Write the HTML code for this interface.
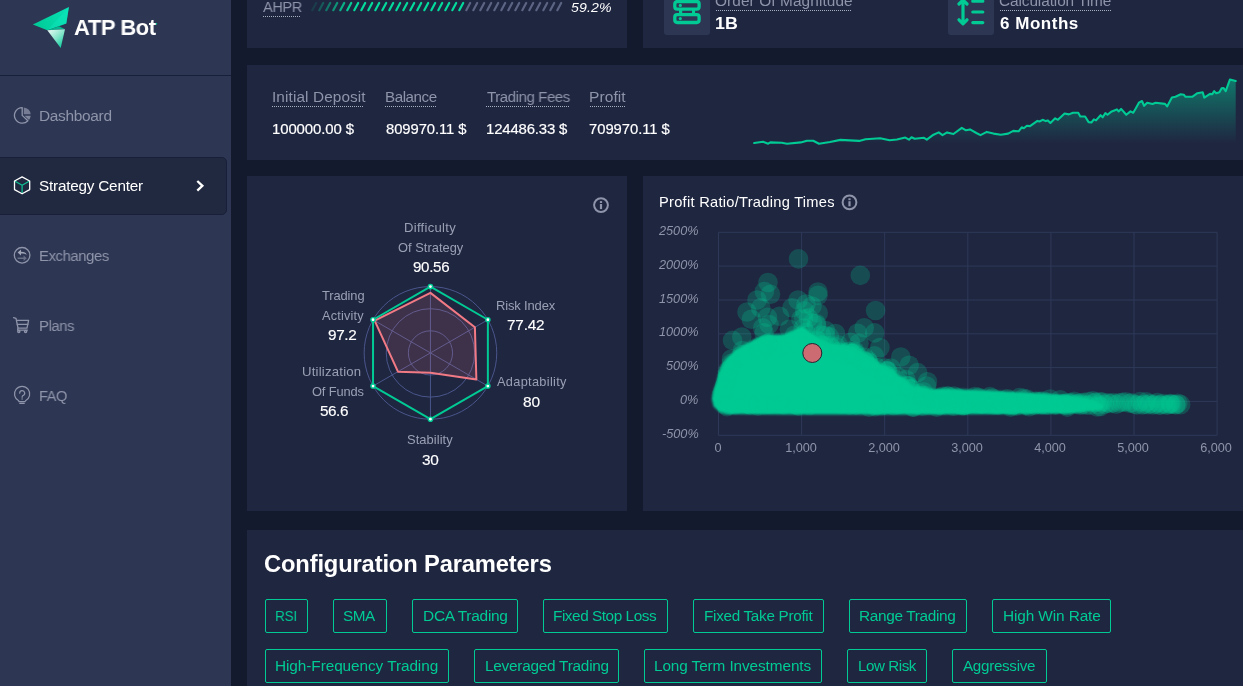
<!DOCTYPE html>
<html><head><meta charset="utf-8"><title>ATP Bot</title>
<style>
html,body{margin:0;padding:0;}
body{width:1243px;height:686px;overflow:hidden;background:#131a2e;position:relative;font-family:"Liberation Sans",sans-serif;}
.side{position:absolute;left:0;top:0;width:231px;height:686px;background:#2d3753;}
.hr{position:absolute;left:0;top:75px;width:231px;height:1px;background:#172039;}
.act{position:absolute;left:-1px;top:157px;width:226px;height:56px;background:#20293f;border:1px solid #172038;border-radius:0 5px 5px 0;}
.card{position:absolute;background:#1f2640;}
.t{position:absolute;white-space:nowrap;line-height:1;transform-origin:0 50%;will-change:transform;}
.ul{position:absolute;height:1.2px;background:repeating-linear-gradient(90deg,#a9aec0 0 1px,transparent 1px 2px);}
.ib{position:absolute;background:#2d3753;border-radius:3px;}
.tag{position:absolute;height:34px;border:1px solid #01ca94;border-radius:2px;box-sizing:border-box;}
svg{position:absolute;left:0;top:0;}
</style></head><body>
<div class="side"></div><div class="hr"></div><div class="act"></div>
<div class="card" style="left:247px;top:0;width:380px;height:48px"></div>
<div class="card" style="left:643px;top:0;width:600px;height:48px"></div>
<div class="card" style="left:247px;top:65px;width:996px;height:95px"></div>
<div class="card" style="left:247px;top:176px;width:380px;height:335px"></div>
<div class="card" style="left:643px;top:176px;width:600px;height:335px"></div>
<div class="card" style="left:247px;top:530px;width:996px;height:156px"></div>
<div class="ib" style="left:664px;top:-10px;width:46px;height:45px"></div>
<div class="ib" style="left:948px;top:-10px;width:46px;height:45px"></div>
<div class="ul" style="left:263px;top:16px;width:38px"></div>
<div class="ul" style="left:716px;top:10px;width:136px"></div>
<div class="ul" style="left:1000px;top:10px;width:111px"></div>
<div class="ul" style="left:272px;top:106px;width:92px"></div>
<div class="ul" style="left:385px;top:106px;width:51px"></div>
<div class="ul" style="left:486px;top:106px;width:83px"></div>
<div class="ul" style="left:589.5px;top:106px;width:36px"></div>
<div class="tag" style="left:265px;top:599px;width:43px"></div>
<div class="tag" style="left:333px;top:599px;width:54px"></div>
<div class="tag" style="left:412px;top:599px;width:106px"></div>
<div class="tag" style="left:543px;top:599px;width:125px"></div>
<div class="tag" style="left:693px;top:599px;width:131px"></div>
<div class="tag" style="left:849px;top:599px;width:118px"></div>
<div class="tag" style="left:992px;top:599px;width:119px"></div>
<div class="tag" style="left:265px;top:649px;width:184px"></div>
<div class="tag" style="left:474px;top:649px;width:145px"></div>
<div class="tag" style="left:644px;top:649px;width:178px"></div>
<div class="tag" style="left:847px;top:649px;width:80px"></div>
<div class="tag" style="left:952px;top:649px;width:95px"></div>
<svg width="1243" height="686" viewBox="0 0 1243 686">
<defs><linearGradient id="sg" x1="0" y1="79" x2="0" y2="143.5" gradientUnits="userSpaceOnUse"><stop offset="0" stop-color="#02c896" stop-opacity="0.5"/><stop offset="1" stop-color="#02c896" stop-opacity="0"/></linearGradient></defs>
<polygon points="754.2,143.0 763.0,141.8 768.2,143.7 770.3,142.4 781.8,142.8 787.0,143.7 800.7,142.4 807.0,140.7 813.2,140.7 819.0,143.7 830.0,142.0 840.4,139.9 859.2,140.9 865.5,139.3 880.2,138.2 889.6,140.3 896.9,139.5 905.3,137.6 909.0,139.7 911.5,137.2 914.7,138.8 924.0,137.8 926.8,139.7 933.5,134.7 938.7,132.4 942.5,135.1 947.1,132.4 953.4,134.0 961.8,127.8 966.0,130.3 970.0,129.4 976.4,133.0 980.5,135.1 986.8,131.9 993.5,133.6 1000.8,134.7 1008.1,133.6 1013.3,130.9 1018.6,131.3 1021.7,127.3 1023.8,128.2 1026.9,125.7 1030.0,126.1 1037.4,120.9 1039.5,121.5 1042.6,119.8 1045.8,121.1 1047.9,120.4 1050.4,123.0 1055.2,118.3 1057.9,119.8 1064.6,113.5 1068.8,114.4 1073.0,112.7 1078.2,112.7 1080.3,116.5 1085.1,116.5 1088.6,122.1 1091.4,122.5 1093.9,119.4 1096.0,120.4 1100.6,115.2 1102.7,117.3 1105.4,113.1 1107.5,114.8 1111.7,111.4 1116.9,109.4 1118.6,111.4 1121.1,108.9 1126.3,114.8 1130.5,111.4 1133.2,112.7 1135.7,108.5 1138.9,102.7 1142.0,101.0 1144.1,105.8 1147.2,102.7 1152.5,103.9 1155.6,102.7 1165.0,103.9 1167.1,106.4 1171.9,97.6 1175.5,96.8 1180.7,94.3 1183.8,94.7 1185.5,96.8 1192.2,96.8 1197.4,93.2 1202.7,92.2 1204.3,97.6 1210.0,93.9 1212.1,94.3 1214.2,91.2 1216.3,93.2 1219.4,92.2 1221.5,88.4 1223.6,88.0 1225.7,91.2 1229.9,79.6 1235.7,80.9 1235.7,143.5 754.2,143.5" fill="url(#sg)"/><polyline points="754.2,143.0 763.0,141.8 768.2,143.7 770.3,142.4 781.8,142.8 787.0,143.7 800.7,142.4 807.0,140.7 813.2,140.7 819.0,143.7 830.0,142.0 840.4,139.9 859.2,140.9 865.5,139.3 880.2,138.2 889.6,140.3 896.9,139.5 905.3,137.6 909.0,139.7 911.5,137.2 914.7,138.8 924.0,137.8 926.8,139.7 933.5,134.7 938.7,132.4 942.5,135.1 947.1,132.4 953.4,134.0 961.8,127.8 966.0,130.3 970.0,129.4 976.4,133.0 980.5,135.1 986.8,131.9 993.5,133.6 1000.8,134.7 1008.1,133.6 1013.3,130.9 1018.6,131.3 1021.7,127.3 1023.8,128.2 1026.9,125.7 1030.0,126.1 1037.4,120.9 1039.5,121.5 1042.6,119.8 1045.8,121.1 1047.9,120.4 1050.4,123.0 1055.2,118.3 1057.9,119.8 1064.6,113.5 1068.8,114.4 1073.0,112.7 1078.2,112.7 1080.3,116.5 1085.1,116.5 1088.6,122.1 1091.4,122.5 1093.9,119.4 1096.0,120.4 1100.6,115.2 1102.7,117.3 1105.4,113.1 1107.5,114.8 1111.7,111.4 1116.9,109.4 1118.6,111.4 1121.1,108.9 1126.3,114.8 1130.5,111.4 1133.2,112.7 1135.7,108.5 1138.9,102.7 1142.0,101.0 1144.1,105.8 1147.2,102.7 1152.5,103.9 1155.6,102.7 1165.0,103.9 1167.1,106.4 1171.9,97.6 1175.5,96.8 1180.7,94.3 1183.8,94.7 1185.5,96.8 1192.2,96.8 1197.4,93.2 1202.7,92.2 1204.3,97.6 1210.0,93.9 1212.1,94.3 1214.2,91.2 1216.3,93.2 1219.4,92.2 1221.5,88.4 1223.6,88.0 1225.7,91.2 1229.9,79.6 1235.7,80.9" fill="none" stroke="#01ca94" stroke-width="2.1" stroke-linejoin="round" stroke-linecap="round"/>
<line x1="312.3" y1="10.2" x2="316.2" y2="3" stroke="#04da9c" stroke-width="2.2" stroke-linecap="round" opacity="0.12"/>
<line x1="319.3" y1="10.2" x2="323.2" y2="3" stroke="#04da9c" stroke-width="2.2" stroke-linecap="round" opacity="0.28"/>
<line x1="326.3" y1="10.2" x2="330.2" y2="3" stroke="#04da9c" stroke-width="2.2" stroke-linecap="round" opacity="0.44"/>
<line x1="333.3" y1="10.2" x2="337.2" y2="3" stroke="#04da9c" stroke-width="2.2" stroke-linecap="round" opacity="0.60"/>
<line x1="340.3" y1="10.2" x2="344.2" y2="3" stroke="#04da9c" stroke-width="2.2" stroke-linecap="round" opacity="0.76"/>
<line x1="347.3" y1="10.2" x2="351.2" y2="3" stroke="#04da9c" stroke-width="2.2" stroke-linecap="round" opacity="0.92"/>
<line x1="354.3" y1="10.2" x2="358.2" y2="3" stroke="#04da9c" stroke-width="2.2" stroke-linecap="round" opacity="1.00"/>
<line x1="361.3" y1="10.2" x2="365.2" y2="3" stroke="#04da9c" stroke-width="2.2" stroke-linecap="round" opacity="1.00"/>
<line x1="368.3" y1="10.2" x2="372.2" y2="3" stroke="#04da9c" stroke-width="2.2" stroke-linecap="round" opacity="1.00"/>
<line x1="375.3" y1="10.2" x2="379.2" y2="3" stroke="#04da9c" stroke-width="2.2" stroke-linecap="round" opacity="1.00"/>
<line x1="382.3" y1="10.2" x2="386.2" y2="3" stroke="#04da9c" stroke-width="2.2" stroke-linecap="round" opacity="1.00"/>
<line x1="389.3" y1="10.2" x2="393.2" y2="3" stroke="#04da9c" stroke-width="2.2" stroke-linecap="round" opacity="1.00"/>
<line x1="396.3" y1="10.2" x2="400.2" y2="3" stroke="#04da9c" stroke-width="2.2" stroke-linecap="round" opacity="1.00"/>
<line x1="403.3" y1="10.2" x2="407.2" y2="3" stroke="#04da9c" stroke-width="2.2" stroke-linecap="round" opacity="1.00"/>
<line x1="410.3" y1="10.2" x2="414.2" y2="3" stroke="#04da9c" stroke-width="2.2" stroke-linecap="round" opacity="1.00"/>
<line x1="417.3" y1="10.2" x2="421.2" y2="3" stroke="#04da9c" stroke-width="2.2" stroke-linecap="round" opacity="1.00"/>
<line x1="424.3" y1="10.2" x2="428.2" y2="3" stroke="#04da9c" stroke-width="2.2" stroke-linecap="round" opacity="1.00"/>
<line x1="431.3" y1="10.2" x2="435.2" y2="3" stroke="#04da9c" stroke-width="2.2" stroke-linecap="round" opacity="1.00"/>
<line x1="438.3" y1="10.2" x2="442.2" y2="3" stroke="#04da9c" stroke-width="2.2" stroke-linecap="round" opacity="1.00"/>
<line x1="445.3" y1="10.2" x2="449.2" y2="3" stroke="#04da9c" stroke-width="2.2" stroke-linecap="round" opacity="1.00"/>
<line x1="452.3" y1="10.2" x2="456.2" y2="3" stroke="#04da9c" stroke-width="2.2" stroke-linecap="round" opacity="1.00"/>
<line x1="459.3" y1="10.2" x2="463.2" y2="3" stroke="#04da9c" stroke-width="2.2" stroke-linecap="round" opacity="1.00"/>
<line x1="466.3" y1="10.2" x2="470.2" y2="3" stroke="#5b6483" stroke-width="2.2" stroke-linecap="round" opacity="1.00"/>
<line x1="473.3" y1="10.2" x2="477.2" y2="3" stroke="#5b6483" stroke-width="2.2" stroke-linecap="round" opacity="1.00"/>
<line x1="480.3" y1="10.2" x2="484.2" y2="3" stroke="#5b6483" stroke-width="2.2" stroke-linecap="round" opacity="1.00"/>
<line x1="487.3" y1="10.2" x2="491.2" y2="3" stroke="#5b6483" stroke-width="2.2" stroke-linecap="round" opacity="1.00"/>
<line x1="494.3" y1="10.2" x2="498.2" y2="3" stroke="#5b6483" stroke-width="2.2" stroke-linecap="round" opacity="1.00"/>
<line x1="501.3" y1="10.2" x2="505.2" y2="3" stroke="#5b6483" stroke-width="2.2" stroke-linecap="round" opacity="1.00"/>
<line x1="508.3" y1="10.2" x2="512.2" y2="3" stroke="#5b6483" stroke-width="2.2" stroke-linecap="round" opacity="1.00"/>
<line x1="515.3" y1="10.2" x2="519.2" y2="3" stroke="#5b6483" stroke-width="2.2" stroke-linecap="round" opacity="1.00"/>
<line x1="522.3" y1="10.2" x2="526.2" y2="3" stroke="#5b6483" stroke-width="2.2" stroke-linecap="round" opacity="1.00"/>
<line x1="529.3" y1="10.2" x2="533.2" y2="3" stroke="#5b6483" stroke-width="2.2" stroke-linecap="round" opacity="1.00"/>
<line x1="536.3" y1="10.2" x2="540.2" y2="3" stroke="#5b6483" stroke-width="2.2" stroke-linecap="round" opacity="1.00"/>
<line x1="543.3" y1="10.2" x2="547.2" y2="3" stroke="#5b6483" stroke-width="2.2" stroke-linecap="round" opacity="1.00"/>
<line x1="550.3" y1="10.2" x2="554.2" y2="3" stroke="#5b6483" stroke-width="2.2" stroke-linecap="round" opacity="1.00"/>
<line x1="557.3" y1="10.2" x2="561.2" y2="3" stroke="#5b6483" stroke-width="2.2" stroke-linecap="round" opacity="1.00"/>
<circle cx="430.45" cy="352.9" r="22.10" fill="none" stroke="#4a568c" stroke-width="1"/>
<circle cx="430.45" cy="352.9" r="44.20" fill="none" stroke="#4a568c" stroke-width="1"/>
<circle cx="430.45" cy="352.9" r="66.30" fill="none" stroke="#4a568c" stroke-width="1"/>
<line x1="430.45" y1="352.9" x2="430.45" y2="286.60" stroke="#4a568c" stroke-width="1"/>
<line x1="430.45" y1="352.9" x2="487.87" y2="319.75" stroke="#4a568c" stroke-width="1"/>
<line x1="430.45" y1="352.9" x2="487.87" y2="386.05" stroke="#4a568c" stroke-width="1"/>
<line x1="430.45" y1="352.9" x2="430.45" y2="419.20" stroke="#4a568c" stroke-width="1"/>
<line x1="430.45" y1="352.9" x2="373.03" y2="386.05" stroke="#4a568c" stroke-width="1"/>
<line x1="430.45" y1="352.9" x2="373.03" y2="319.75" stroke="#4a568c" stroke-width="1"/>
<polygon points="430.45,292.86 474.90,327.24 476.38,379.42 430.45,372.79 397.95,371.66 374.64,320.68" fill="#f0788a" fill-opacity="0.15" stroke="#f27a85" stroke-width="2" stroke-linejoin="round"/>
<polygon points="430.45,286.60 487.87,319.75 487.87,386.05 430.45,419.20 373.03,386.05 373.03,319.75" fill="none" stroke="#01ca94" stroke-width="2" stroke-linejoin="round"/>
<circle cx="430.45" cy="286.60" r="2.1" fill="#fff" stroke="#01ca94" stroke-width="1.4"/>
<circle cx="487.87" cy="319.75" r="2.1" fill="#fff" stroke="#01ca94" stroke-width="1.4"/>
<circle cx="487.87" cy="386.05" r="2.1" fill="#fff" stroke="#01ca94" stroke-width="1.4"/>
<circle cx="430.45" cy="419.20" r="2.1" fill="#fff" stroke="#01ca94" stroke-width="1.4"/>
<circle cx="373.03" cy="386.05" r="2.1" fill="#fff" stroke="#01ca94" stroke-width="1.4"/>
<circle cx="373.03" cy="319.75" r="2.1" fill="#fff" stroke="#01ca94" stroke-width="1.4"/>
<line x1="718.5" y1="232.3" x2="1217.1" y2="232.3" stroke="#2e3958" stroke-width="1"/>
<line x1="718.5" y1="266.1" x2="1217.1" y2="266.1" stroke="#2e3958" stroke-width="1"/>
<line x1="718.5" y1="300.0" x2="1217.1" y2="300.0" stroke="#2e3958" stroke-width="1"/>
<line x1="718.5" y1="333.8" x2="1217.1" y2="333.8" stroke="#2e3958" stroke-width="1"/>
<line x1="718.5" y1="367.6" x2="1217.1" y2="367.6" stroke="#2e3958" stroke-width="1"/>
<line x1="718.5" y1="401.4" x2="1217.1" y2="401.4" stroke="#2e3958" stroke-width="1"/>
<line x1="718.5" y1="435.3" x2="1217.1" y2="435.3" stroke="#2e3958" stroke-width="1"/>
<line x1="718.5" y1="232.3" x2="718.5" y2="435.3" stroke="#2e3958" stroke-width="1"/>
<line x1="801.6" y1="232.3" x2="801.6" y2="435.3" stroke="#2e3958" stroke-width="1"/>
<line x1="884.7" y1="232.3" x2="884.7" y2="435.3" stroke="#2e3958" stroke-width="1"/>
<line x1="967.8" y1="232.3" x2="967.8" y2="435.3" stroke="#2e3958" stroke-width="1"/>
<line x1="1050.9" y1="232.3" x2="1050.9" y2="435.3" stroke="#2e3958" stroke-width="1"/>
<line x1="1134.0" y1="232.3" x2="1134.0" y2="435.3" stroke="#2e3958" stroke-width="1"/>
<line x1="1217.1" y1="232.3" x2="1217.1" y2="435.3" stroke="#2e3958" stroke-width="1"/>
<defs><filter id="bl" x="-5%" y="-10%" width="110%" height="120%"><feGaussianBlur stdDeviation="1.3"/></filter></defs>
<polygon points="712.9,399.0 714.3,392.0 717.3,383.0 719.3,375.0 721.3,371.0 727.2,359.5 735.6,351.1 746.0,344.8 756.5,339.5 769.0,335.4 783.7,335.4 794.0,331.2 802.5,327.0 810.9,333.3 825.5,343.8 842.3,345.8 854.8,350.0 867.4,357.4 879.9,364.7 892.5,372.0 905.0,380.4 913.4,387.7 930.0,389.8 960.0,390.3 1000.0,392.3 1040.0,394.5 1070.0,397.0 1090.0,400.5 1102.0,405.5 1102.0,408.0 1070.0,412.0 1000.0,413.0 900.0,413.4 800.0,413.4 730.0,413.0 720.0,411.0 714.5,406.0" fill="#01ca94" stroke="#01ca94" stroke-width="2" stroke-linejoin="round" filter="url(#bl)"/>
<g fill="#01ca94" fill-opacity="0.23">
<circle cx="816.3" cy="323.5" r="9.8"/><circle cx="819.0" cy="343.8" r="9.8"/><circle cx="761.7" cy="348.1" r="9.8"/><circle cx="885.8" cy="375.4" r="9.8"/><circle cx="742.5" cy="350.5" r="9.8"/><circle cx="732.5" cy="340.4" r="9.8"/><circle cx="857.4" cy="357.2" r="9.8"/><circle cx="727.1" cy="375.2" r="9.8"/><circle cx="762.8" cy="353.2" r="9.8"/><circle cx="818.6" cy="341.3" r="9.8"/><circle cx="829.9" cy="345.8" r="9.8"/><circle cx="859.1" cy="360.0" r="9.8"/><circle cx="927.5" cy="381.8" r="9.8"/><circle cx="868.4" cy="365.9" r="9.8"/><circle cx="783.0" cy="344.5" r="9.8"/><circle cx="805.7" cy="332.5" r="9.8"/><circle cx="919.4" cy="395.5" r="9.8"/><circle cx="766.8" cy="344.0" r="9.8"/><circle cx="924.0" cy="398.4" r="9.8"/><circle cx="852.4" cy="353.7" r="9.8"/><circle cx="741.8" cy="354.7" r="9.8"/><circle cx="878.6" cy="371.7" r="9.8"/><circle cx="744.6" cy="354.5" r="9.8"/><circle cx="760.2" cy="346.5" r="9.8"/><circle cx="762.9" cy="349.3" r="9.8"/><circle cx="855.3" cy="356.5" r="9.8"/><circle cx="767.4" cy="343.2" r="9.8"/><circle cx="887.9" cy="371.4" r="9.8"/><circle cx="767.0" cy="344.4" r="9.8"/><circle cx="854.9" cy="351.2" r="9.8"/><circle cx="767.5" cy="344.9" r="9.8"/><circle cx="791.1" cy="345.9" r="9.8"/><circle cx="742.4" cy="357.8" r="9.8"/><circle cx="846.7" cy="353.2" r="9.8"/><circle cx="919.7" cy="393.3" r="9.8"/><circle cx="900.8" cy="386.2" r="9.8"/><circle cx="909.3" cy="388.9" r="9.8"/><circle cx="762.7" cy="327.9" r="9.8"/><circle cx="764.1" cy="332.9" r="9.8"/><circle cx="847.1" cy="356.5" r="9.8"/><circle cx="731.9" cy="365.6" r="9.8"/><circle cx="867.7" cy="360.2" r="9.8"/><circle cx="845.7" cy="355.4" r="9.8"/><circle cx="871.0" cy="367.4" r="9.8"/><circle cx="838.1" cy="344.7" r="9.8"/><circle cx="781.2" cy="346.6" r="9.8"/><circle cx="727.4" cy="371.3" r="9.8"/><circle cx="736.3" cy="363.3" r="9.8"/><circle cx="840.7" cy="352.4" r="9.8"/><circle cx="905.8" cy="379.5" r="9.8"/><circle cx="865.0" cy="361.8" r="9.8"/><circle cx="731.2" cy="363.4" r="9.8"/><circle cx="867.0" cy="364.0" r="9.8"/><circle cx="853.8" cy="353.1" r="9.8"/><circle cx="789.1" cy="344.4" r="9.8"/><circle cx="835.4" cy="333.5" r="9.8"/><circle cx="874.4" cy="355.9" r="9.8"/><circle cx="910.7" cy="389.2" r="9.8"/><circle cx="907.8" cy="385.5" r="9.8"/><circle cx="885.3" cy="368.0" r="9.8"/><circle cx="851.5" cy="353.6" r="9.8"/><circle cx="848.2" cy="352.0" r="9.8"/><circle cx="926.6" cy="386.0" r="9.8"/><circle cx="803.2" cy="328.1" r="9.8"/><circle cx="813.9" cy="341.7" r="9.8"/><circle cx="877.0" cy="367.6" r="9.8"/><circle cx="822.1" cy="345.1" r="9.8"/><circle cx="825.4" cy="330.5" r="9.8"/><circle cx="776.2" cy="348.7" r="9.8"/><circle cx="862.3" cy="362.9" r="9.8"/><circle cx="908.8" cy="386.0" r="9.8"/><circle cx="905.9" cy="385.2" r="9.8"/><circle cx="764.5" cy="345.6" r="9.8"/><circle cx="910.5" cy="388.3" r="9.8"/><circle cx="843.0" cy="354.8" r="9.8"/><circle cx="825.3" cy="335.5" r="9.8"/><circle cx="869.1" cy="362.8" r="9.8"/><circle cx="758.5" cy="352.4" r="9.8"/><circle cx="767.7" cy="346.2" r="9.8"/><circle cx="824.8" cy="345.7" r="9.8"/><circle cx="924.3" cy="398.4" r="9.8"/><circle cx="730.4" cy="368.9" r="9.8"/><circle cx="868.6" cy="362.1" r="9.8"/><circle cx="885.5" cy="376.7" r="9.8"/><circle cx="816.8" cy="340.1" r="9.8"/><circle cx="772.4" cy="351.0" r="9.8"/><circle cx="852.4" cy="353.5" r="9.8"/><circle cx="857.6" cy="333.2" r="9.8"/><circle cx="863.6" cy="360.9" r="9.8"/><circle cx="760.5" cy="350.0" r="9.8"/><circle cx="869.7" cy="366.3" r="9.8"/><circle cx="794.5" cy="335.2" r="9.8"/><circle cx="849.3" cy="351.2" r="9.8"/><circle cx="885.6" cy="374.2" r="9.8"/><circle cx="914.3" cy="393.7" r="9.8"/><circle cx="816.5" cy="325.1" r="9.8"/><circle cx="800.9" cy="319.1" r="9.8"/><circle cx="886.5" cy="370.6" r="9.8"/><circle cx="856.9" cy="354.7" r="9.8"/><circle cx="890.9" cy="368.0" r="9.8"/><circle cx="767.5" cy="317.4" r="9.8"/><circle cx="923.4" cy="391.8" r="9.8"/><circle cx="789.4" cy="329.3" r="9.8"/><circle cx="795.1" cy="339.7" r="9.8"/><circle cx="836.3" cy="346.7" r="9.8"/><circle cx="729.8" cy="369.4" r="9.8"/><circle cx="887.2" cy="375.9" r="9.8"/><circle cx="884.7" cy="376.2" r="9.8"/><circle cx="829.4" cy="336.6" r="9.8"/><circle cx="864.6" cy="357.3" r="9.8"/><circle cx="917.6" cy="396.2" r="9.8"/><circle cx="831.4" cy="347.9" r="9.8"/><circle cx="854.3" cy="352.2" r="9.8"/><circle cx="838.2" cy="351.9" r="9.8"/><circle cx="896.4" cy="379.8" r="9.8"/><circle cx="897.6" cy="376.5" r="9.8"/><circle cx="840.9" cy="350.8" r="9.8"/><circle cx="826.6" cy="350.7" r="9.8"/><circle cx="921.8" cy="395.2" r="9.8"/><circle cx="887.4" cy="370.7" r="9.8"/><circle cx="865.0" cy="361.1" r="9.8"/><circle cx="808.4" cy="317.9" r="9.8"/><circle cx="778.9" cy="350.3" r="9.8"/><circle cx="812.5" cy="323.0" r="9.8"/><circle cx="821.2" cy="349.0" r="9.8"/><circle cx="724.2" cy="391.8" r="9.8"/><circle cx="728.2" cy="376.1" r="9.8"/><circle cx="728.0" cy="372.7" r="9.8"/><circle cx="727.2" cy="379.3" r="9.8"/><circle cx="725.7" cy="382.3" r="9.8"/><circle cx="722.5" cy="391.8" r="9.8"/><circle cx="721.5" cy="395.4" r="9.8"/><circle cx="723.8" cy="388.3" r="9.8"/><circle cx="727.1" cy="378.3" r="9.8"/><circle cx="724.7" cy="386.0" r="9.8"/><circle cx="878.1" cy="404.8" r="9.8"/><circle cx="781.7" cy="404.2" r="9.8"/><circle cx="960.9" cy="405.1" r="9.8"/><circle cx="922.3" cy="406.2" r="9.8"/><circle cx="953.5" cy="406.2" r="9.8"/><circle cx="809.4" cy="405.5" r="9.8"/><circle cx="1029.0" cy="406.7" r="9.8"/><circle cx="841.0" cy="404.4" r="9.8"/><circle cx="1071.7" cy="404.2" r="9.8"/><circle cx="1100.4" cy="406.5" r="9.8"/><circle cx="771.9" cy="404.2" r="9.8"/><circle cx="997.1" cy="404.3" r="9.8"/><circle cx="757.9" cy="406.0" r="9.8"/><circle cx="881.2" cy="405.8" r="9.8"/><circle cx="768.9" cy="404.5" r="9.8"/><circle cx="981.4" cy="403.9" r="9.8"/><circle cx="797.4" cy="405.3" r="9.8"/><circle cx="1067.3" cy="407.1" r="9.8"/><circle cx="764.9" cy="404.7" r="9.8"/><circle cx="1009.1" cy="404.7" r="9.8"/><circle cx="981.6" cy="404.2" r="9.8"/><circle cx="747.8" cy="404.0" r="9.8"/><circle cx="735.2" cy="404.9" r="9.8"/><circle cx="916.6" cy="404.9" r="9.8"/><circle cx="776.7" cy="404.1" r="9.8"/><circle cx="798.5" cy="406.1" r="9.8"/><circle cx="1097.3" cy="407.0" r="9.8"/><circle cx="757.2" cy="404.0" r="9.8"/><circle cx="1082.6" cy="404.6" r="9.8"/><circle cx="1011.6" cy="404.4" r="9.8"/><circle cx="898.4" cy="404.8" r="9.8"/><circle cx="884.4" cy="405.0" r="9.8"/><circle cx="726.0" cy="405.3" r="9.8"/><circle cx="1041.8" cy="404.1" r="9.8"/><circle cx="893.5" cy="405.5" r="9.8"/><circle cx="875.0" cy="404.2" r="9.8"/><circle cx="783.7" cy="404.8" r="9.8"/><circle cx="726.9" cy="406.6" r="9.8"/><circle cx="1025.6" cy="405.4" r="9.8"/><circle cx="1048.1" cy="405.1" r="9.8"/><circle cx="874.7" cy="405.0" r="9.8"/><circle cx="912.6" cy="407.1" r="9.8"/><circle cx="1026.8" cy="404.3" r="9.8"/><circle cx="1067.3" cy="405.5" r="9.8"/><circle cx="1016.6" cy="405.9" r="9.8"/><circle cx="875.1" cy="406.6" r="9.8"/><circle cx="1055.3" cy="405.3" r="9.8"/><circle cx="1012.6" cy="405.6" r="9.8"/><circle cx="875.2" cy="405.4" r="9.8"/><circle cx="747.8" cy="404.4" r="9.8"/><circle cx="899.2" cy="403.9" r="9.8"/><circle cx="856.1" cy="405.1" r="9.8"/><circle cx="958.1" cy="404.2" r="9.8"/><circle cx="1080.0" cy="405.2" r="9.8"/><circle cx="849.4" cy="405.2" r="9.8"/><circle cx="937.4" cy="404.8" r="9.8"/><circle cx="869.0" cy="407.1" r="9.8"/><circle cx="965.1" cy="405.3" r="9.8"/><circle cx="1010.5" cy="407.1" r="9.8"/><circle cx="729.7" cy="405.0" r="9.8"/><circle cx="1001.7" cy="404.3" r="9.8"/><circle cx="873.6" cy="404.0" r="9.8"/><circle cx="795.3" cy="404.5" r="9.8"/><circle cx="758.4" cy="404.2" r="9.8"/><circle cx="1065.1" cy="404.9" r="9.8"/><circle cx="914.0" cy="407.1" r="9.8"/><circle cx="936.8" cy="407.1" r="9.8"/><circle cx="963.4" cy="405.9" r="9.8"/><circle cx="750.0" cy="405.0" r="9.8"/><circle cx="1009.5" cy="404.0" r="9.8"/><circle cx="925.0" cy="395.2" r="9.8"/><circle cx="926.1" cy="401.8" r="9.8"/><circle cx="927.3" cy="401.6" r="9.8"/><circle cx="929.0" cy="405.1" r="9.8"/><circle cx="931.3" cy="402.5" r="9.8"/><circle cx="933.0" cy="400.4" r="9.8"/><circle cx="934.4" cy="403.7" r="9.8"/><circle cx="936.3" cy="400.9" r="9.8"/><circle cx="937.6" cy="398.9" r="9.8"/><circle cx="939.0" cy="405.2" r="9.8"/><circle cx="940.2" cy="405.1" r="9.8"/><circle cx="941.4" cy="398.4" r="9.8"/><circle cx="942.9" cy="396.3" r="9.8"/><circle cx="944.9" cy="405.1" r="9.8"/><circle cx="947.3" cy="395.7" r="9.8"/><circle cx="948.3" cy="396.3" r="9.8"/><circle cx="949.9" cy="402.0" r="9.8"/><circle cx="952.3" cy="404.1" r="9.8"/><circle cx="954.0" cy="396.0" r="9.8"/><circle cx="956.1" cy="402.2" r="9.8"/><circle cx="958.5" cy="398.0" r="9.8"/><circle cx="960.4" cy="404.9" r="9.8"/><circle cx="962.3" cy="402.4" r="9.8"/><circle cx="963.6" cy="405.1" r="9.8"/><circle cx="965.3" cy="404.9" r="9.8"/><circle cx="967.0" cy="400.1" r="9.8"/><circle cx="968.6" cy="404.1" r="9.8"/><circle cx="970.5" cy="402.8" r="9.8"/><circle cx="972.7" cy="401.7" r="9.8"/><circle cx="975.2" cy="396.5" r="9.8"/><circle cx="977.4" cy="404.3" r="9.8"/><circle cx="978.5" cy="397.4" r="9.8"/><circle cx="980.8" cy="400.8" r="9.8"/><circle cx="982.3" cy="404.1" r="9.8"/><circle cx="984.4" cy="401.5" r="9.8"/><circle cx="986.3" cy="400.8" r="9.8"/><circle cx="988.5" cy="404.6" r="9.8"/><circle cx="989.9" cy="396.6" r="9.8"/><circle cx="992.4" cy="398.0" r="9.8"/><circle cx="993.5" cy="405.1" r="9.8"/><circle cx="995.0" cy="403.0" r="9.8"/><circle cx="997.0" cy="405.0" r="9.8"/><circle cx="998.9" cy="405.1" r="9.8"/><circle cx="1000.1" cy="400.6" r="9.8"/><circle cx="1002.0" cy="401.1" r="9.8"/><circle cx="1003.6" cy="402.6" r="9.8"/><circle cx="1005.0" cy="403.7" r="9.8"/><circle cx="1007.3" cy="398.9" r="9.8"/><circle cx="1008.4" cy="404.9" r="9.8"/><circle cx="1010.8" cy="401.4" r="9.8"/><circle cx="1013.2" cy="404.5" r="9.8"/><circle cx="1015.0" cy="404.3" r="9.8"/><circle cx="1017.4" cy="403.6" r="9.8"/><circle cx="1019.6" cy="397.5" r="9.8"/><circle cx="1021.2" cy="402.2" r="9.8"/><circle cx="1023.5" cy="398.4" r="9.8"/><circle cx="1025.4" cy="403.6" r="9.8"/><circle cx="1026.6" cy="399.0" r="9.8"/><circle cx="1027.8" cy="405.1" r="9.8"/><circle cx="1029.9" cy="402.8" r="9.8"/><circle cx="1032.2" cy="404.1" r="9.8"/><circle cx="1034.6" cy="405.1" r="9.8"/><circle cx="1036.1" cy="401.4" r="9.8"/><circle cx="1037.3" cy="404.1" r="9.8"/><circle cx="1039.7" cy="401.2" r="9.8"/><circle cx="1041.4" cy="404.9" r="9.8"/><circle cx="1043.1" cy="401.0" r="9.8"/><circle cx="1044.9" cy="405.0" r="9.8"/><circle cx="1047.3" cy="402.4" r="9.8"/><circle cx="1050.1" cy="399.0" r="9.8"/><circle cx="1052.9" cy="403.4" r="9.8"/><circle cx="1055.5" cy="404.2" r="9.8"/><circle cx="1057.3" cy="403.7" r="9.8"/><circle cx="1060.2" cy="399.8" r="9.8"/><circle cx="1061.8" cy="403.9" r="9.8"/><circle cx="1063.6" cy="403.9" r="9.8"/><circle cx="1065.5" cy="403.8" r="9.8"/><circle cx="1067.1" cy="402.7" r="9.8"/><circle cx="1069.8" cy="402.9" r="9.8"/><circle cx="1072.6" cy="402.8" r="9.8"/><circle cx="1074.1" cy="401.4" r="9.8"/><circle cx="1077.0" cy="404.4" r="9.8"/><circle cx="1078.2" cy="403.2" r="9.8"/><circle cx="1080.5" cy="402.9" r="9.8"/><circle cx="1083.6" cy="402.4" r="9.8"/><circle cx="1086.4" cy="405.1" r="9.8"/><circle cx="1088.7" cy="401.5" r="9.8"/><circle cx="1090.1" cy="405.1" r="9.8"/><circle cx="1092.9" cy="400.7" r="9.8"/><circle cx="1094.3" cy="402.7" r="9.8"/><circle cx="1095.8" cy="402.0" r="9.8"/><circle cx="1098.4" cy="404.7" r="9.8"/><circle cx="1100.1" cy="401.9" r="9.8"/><circle cx="1102.4" cy="402.0" r="9.8"/><circle cx="1104.5" cy="404.3" r="9.8"/><circle cx="1107.8" cy="402.7" r="9.8"/><circle cx="1110.2" cy="403.5" r="9.8"/><circle cx="1113.0" cy="402.6" r="9.8"/><circle cx="1116.2" cy="404.1" r="9.8"/><circle cx="1119.3" cy="402.9" r="9.8"/><circle cx="1122.5" cy="402.2" r="9.8"/><circle cx="1125.7" cy="401.8" r="9.8"/><circle cx="1129.1" cy="403.2" r="9.8"/><circle cx="1131.7" cy="402.9" r="9.8"/><circle cx="1134.8" cy="404.2" r="9.8"/><circle cx="1137.1" cy="405.0" r="9.8"/><circle cx="1140.2" cy="401.6" r="9.8"/><circle cx="1142.5" cy="405.0" r="9.8"/><circle cx="1144.4" cy="404.3" r="9.8"/><circle cx="1146.4" cy="401.9" r="9.8"/><circle cx="1148.0" cy="404.7" r="9.8"/><circle cx="1149.7" cy="403.6" r="9.8"/><circle cx="1153.0" cy="405.0" r="9.8"/><circle cx="1154.6" cy="404.3" r="9.8"/><circle cx="1157.4" cy="402.6" r="9.8"/><circle cx="1159.0" cy="405.1" r="9.8"/><circle cx="1160.9" cy="404.9" r="9.8"/><circle cx="1162.9" cy="403.5" r="9.8"/><circle cx="1165.9" cy="405.0" r="9.8"/><circle cx="1167.8" cy="404.9" r="9.8"/><circle cx="1169.8" cy="403.5" r="9.8"/><circle cx="1172.1" cy="404.2" r="9.8"/><circle cx="1175.6" cy="404.5" r="9.8"/><circle cx="1177.8" cy="403.3" r="9.8"/><circle cx="1180.7" cy="404.6" r="9.8"/><circle cx="1176.0" cy="404.8" r="9.8"/><circle cx="1170.5" cy="404.0" r="9.8"/><circle cx="798.5" cy="258.9" r="9.8"/><circle cx="860.3" cy="275.4" r="9.8"/><circle cx="768.0" cy="282.5" r="9.8"/><circle cx="764.4" cy="291.5" r="9.8"/><circle cx="770.5" cy="294.2" r="9.8"/><circle cx="818.0" cy="292.0" r="9.8"/><circle cx="818.0" cy="295.2" r="9.8"/><circle cx="875.6" cy="310.5" r="9.8"/><circle cx="760.7" cy="307.8" r="9.8"/><circle cx="792.0" cy="307.8" r="9.8"/><circle cx="804.6" cy="310.9" r="9.8"/><circle cx="818.2" cy="313.0" r="9.8"/><circle cx="779.5" cy="316.2" r="9.8"/><circle cx="751.3" cy="319.3" r="9.8"/><circle cx="803.6" cy="318.2" r="9.8"/><circle cx="864.2" cy="327.7" r="9.8"/><circle cx="874.7" cy="332.9" r="9.8"/><circle cx="741.8" cy="337.0" r="9.8"/><circle cx="821.3" cy="335.0" r="9.8"/><circle cx="879.9" cy="347.5" r="9.8"/><circle cx="900.8" cy="357.0" r="9.8"/><circle cx="909.2" cy="365.3" r="9.8"/><circle cx="917.6" cy="372.6" r="9.8"/><circle cx="769.0" cy="324.5" r="9.8"/><circle cx="731.4" cy="359.0" r="9.8"/><circle cx="859.0" cy="343.3" r="9.8"/><circle cx="850.6" cy="342.3" r="9.8"/><circle cx="757.0" cy="300.0" r="9.8"/><circle cx="747.0" cy="312.0" r="9.8"/><circle cx="798.0" cy="300.0" r="9.8"/><circle cx="806.0" cy="304.0" r="9.8"/><circle cx="812.0" cy="306.0" r="9.8"/>
</g>
<circle cx="812.3" cy="353" r="9.5" fill="#cd6b72" stroke="#2a2030" stroke-width="1"/>
<circle cx="601" cy="205.1" r="6.9" stroke="#8e94a9" fill="none" stroke-width="2"/><rect x="599.9" y="201.1" width="2.2" height="1.9" fill="#8e94a9"/><rect x="599.9" y="204.0" width="2.2" height="5.1" fill="#8e94a9"/>
<circle cx="849.5" cy="202.3" r="6.9" stroke="#8e94a9" fill="none" stroke-width="2"/><rect x="848.4" y="198.3" width="2.2" height="1.9" fill="#8e94a9"/><rect x="848.4" y="201.20000000000002" width="2.2" height="5.1" fill="#8e94a9"/>
<defs>
<linearGradient id="lg1" x1="33" y1="26" x2="69" y2="8" gradientUnits="userSpaceOnUse"><stop offset="0" stop-color="#00c996"/><stop offset="1" stop-color="#08e2b6"/></linearGradient>
<linearGradient id="lg2" x1="49" y1="30" x2="63" y2="46" gradientUnits="userSpaceOnUse"><stop offset="0" stop-color="#e4f8f1"/><stop offset="0.55" stop-color="#7fe3c8"/><stop offset="1" stop-color="#0ccf9f"/></linearGradient>
</defs>
<!-- logo -->
<polygon points="32.9,24.4 68.9,6.9 66.3,23.5 47.3,30.2" fill="url(#lg1)"/>
<polygon points="47.3,30.2 68.9,6.9 66.3,23.5" fill="#10e6bd" opacity="0.45"/>
<polygon points="47.3,30.2 59.1,26.2 65,29.3" fill="#05b58f"/>
<polygon points="47.3,30.3 65,29.3 60.7,47.9" fill="url(#lg2)"/>
<circle cx="156.3" cy="23.8" r="0.9" fill="#01ca94"/>
<!-- dashboard pie -->
<g fill="none" stroke="#8e94a9" stroke-width="1.3" stroke-linejoin="round">
<path d="M22.2 107.6 A7.8 7.8 0 1 0 27.9 120.8 L22.2 115.4 Z"/>
</g>
<path d="M23.8 107.4 A7.3 7.3 0 0 1 30.6 114.3 L23.8 114.3 Z" fill="#8e94a9" opacity="0.75"/>
<path d="M24.6 115.8 L30.6 115.8 A7 7 0 0 1 29 120 Z" fill="#8e94a9" opacity="0.85"/>
<!-- cube -->
<g fill="none" stroke-width="1.3" stroke-linejoin="round">
<path d="M22.1 185.3 L14.6 181 M22.1 185.3 L29.6 181 M22.1 185.3 L22.1 193.6" stroke="#0fbf94"/>
<polygon points="22.1,176.9 29.7,181 29.7,189.6 22.1,193.8 14.5,189.6 14.5,181" stroke="#ffffff"/>
</g>
<!-- chevron -->
<polyline points="197.3,181 202.4,185.8 197.3,190.6" fill="none" stroke="#fff" stroke-width="2.3"/>
<!-- exchanges -->
<g fill="none" stroke="#8e94a9" stroke-width="1.3">
<circle cx="22.1" cy="255.3" r="7.8"/>
</g>
<path d="M17.6 252.6 L21 249.6 L21 251.8 C24.5 251.8 26.3 252.8 26.6 255.2 C25.6 254 24 253.6 21 253.6 L21 255.6 Z" fill="#a0a5b8"/>
<path d="M26.8 258.2 L23.6 261 L23.6 259 L17.6 259 L17.6 257.6 L23.6 257.6 L23.6 255.6 Z" fill="#8e94a9" opacity="0.6"/>
<!-- cart -->
<g fill="none" stroke="#8e94a9" stroke-width="1.3" stroke-linejoin="round" stroke-linecap="round">
<path d="M13.6 317.6 L16 318.4 L18 328.2 L27 328.2 L28.6 320.4 L16.6 320.4"/>
<path d="M17.3 324.4 L27.8 324.4"/>
<path d="M18 328.2 L17.6 330.2 L27.4 330.2"/>
<circle cx="18.8" cy="331.6" r="1.1"/><circle cx="25.6" cy="331.6" r="1.1"/>
</g>
<!-- faq -->
<g fill="none" stroke="#8e94a9" stroke-width="1.2" stroke-linecap="round">
<path d="M18.7 400.8 A7.6 7.6 0 1 1 25.5 400.8"/>
<path d="M18.8 401.6 L25.2 401.6 M19.8 403.4 L24.2 403.4"/>
<path d="M19.7 393.2 A2.5 2.5 0 1 1 22.9 395.6 Q22.1 396.2 22.1 397.3"/>
</g>
<circle cx="22.1" cy="399" r="0.7" fill="#8e94a9"/>
<!-- server icon -->
<g fill="none" stroke="#01ca94" stroke-width="3.3">
<rect x="674.8" y="1.5" width="24.3" height="7.7" rx="2.4"/>
<rect x="674.8" y="14.7" width="24.3" height="7.8" rx="2.4"/>
</g>
<rect x="679" y="10" width="3.2" height="4" fill="#01ca94"/><rect x="692" y="10" width="3.1" height="4" fill="#01ca94"/>
<circle cx="680.3" cy="5.4" r="1.6" fill="#01ca94"/><circle cx="680.3" cy="18.6" r="1.6" fill="#01ca94"/>
<!-- line height icon -->
<g fill="none" stroke="#01ca94" stroke-width="3.2" stroke-linecap="round" stroke-linejoin="round">
<path d="M963 0 L963 23.6 M959 19.8 L963 23.8 L967 19.8 M959 4 L963 0 L967 4"/>
<path d="M972.8 1.2 L982.8 1.2 M972.8 12 L982.8 12 M972.8 22.6 L982.8 22.6"/>
</g>

</svg>
<span class="t" id="t0" style="top:17.01px;font-size:22.3px;color:#ffffff;font-weight:700;left:73.76px;letter-spacing:-0.450px;transform:scaleX(0.9865);">ATP Bot</span>
<span class="t" id="t1" style="top:108.01px;font-size:15.2px;color:#8e94a9;left:38.55px;letter-spacing:-0.312px;transform:scaleX(1.0169);">Dashboard</span>
<span class="t" id="t2" style="top:178.01px;font-size:15.2px;color:#ffffff;left:38.69px;letter-spacing:-0.205px;transform:scaleX(1.0056);">Strategy Center</span>
<span class="t" id="t3" style="top:248.01px;font-size:15.2px;color:#8e94a9;left:38.56px;letter-spacing:-0.450px;transform:scaleX(0.9810);">Exchanges</span>
<span class="t" id="t4" style="top:318.01px;font-size:15.2px;color:#8e94a9;left:38.56px;letter-spacing:-0.450px;transform:scaleX(0.9831);">Plans</span>
<span class="t" id="t5" style="top:388.01px;font-size:15.2px;color:#8e94a9;left:38.55px;letter-spacing:-0.450px;transform:scaleX(0.9578);">FAQ</span>
<span class="t" id="t6" style="top:-1.01px;font-size:15.2px;color:#8e94a9;left:263.00px;letter-spacing:-0.450px;transform:scaleX(0.9588);">AHPR</span>
<span class="t" id="t7" style="top:1.01px;font-size:13.5px;color:#ffffff;font-style:italic;left:571.46px;letter-spacing:0.144px;transform:scaleX(1.0452);">59.2%</span>
<span class="t" id="t8" style="top:-7.01px;font-size:15.2px;color:#8e94a9;left:715.38px;letter-spacing:0.099px;transform:scaleX(1.0131);">Order Of Magnitude</span>
<span class="t" id="t9" style="top:15.01px;font-size:16.3px;color:#ffffff;font-weight:700;left:715.10px;letter-spacing:0.086px;transform:scaleX(1.0930);">1B</span>
<span class="t" id="t10" style="top:-7.01px;font-size:15.2px;color:#8e94a9;left:999.35px;letter-spacing:-0.093px;transform:scaleX(1.0130);">Calculation Time</span>
<span class="t" id="t11" style="top:15.01px;font-size:16.3px;color:#ffffff;font-weight:700;left:999.52px;letter-spacing:0.500px;transform:scaleX(1.0441);">6 Months</span>
<span class="t" id="t12" style="top:89.01px;font-size:15.2px;color:#8e94a9;left:271.50px;letter-spacing:0.109px;transform:scaleX(1.0099);">Initial Deposit</span>
<span class="t" id="t13" style="top:89.01px;font-size:15.2px;color:#8e94a9;left:385.15px;letter-spacing:-0.450px;">Balance</span>
<span class="t" id="t14" style="top:89.01px;font-size:15.2px;color:#8e94a9;left:486.94px;letter-spacing:-0.450px;transform:scaleX(0.9927);">Trading Fees</span>
<span class="t" id="t15" style="top:89.01px;font-size:15.2px;color:#8e94a9;left:588.70px;letter-spacing:0.058px;transform:scaleX(1.0245);">Profit</span>
<span class="t" id="t16" style="top:122.01px;font-size:14.8px;color:#ffffff;left:271.80px;letter-spacing:-0.118px;transform:scaleX(1.0110);-webkit-text-stroke:0.18px #fff;">100000.00 $</span>
<span class="t" id="t17" style="top:122.01px;font-size:14.8px;color:#ffffff;left:386.40px;letter-spacing:-0.064px;-webkit-text-stroke:0.18px #fff;">809970.11 $</span>
<span class="t" id="t18" style="top:122.01px;font-size:14.8px;color:#ffffff;left:486.20px;letter-spacing:-0.172px;transform:scaleX(1.0103);-webkit-text-stroke:0.18px #fff;">124486.33 $</span>
<span class="t" id="t19" style="top:122.01px;font-size:14.8px;color:#ffffff;left:589.46px;letter-spacing:-0.037px;-webkit-text-stroke:0.18px #fff;">709970.11 $</span>
<span class="t" id="t20" style="top:222.01px;font-size:12.7px;color:#9aa0b4;left:404.40px;letter-spacing:0.288px;transform:scaleX(1.0292);">Difficulty</span>
<span class="t" id="t21" style="top:242.01px;font-size:12.7px;color:#9aa0b4;left:398.19px;letter-spacing:0.021px;transform:scaleX(1.0138);">Of Strategy</span>
<span class="t" id="t22" style="top:259.01px;font-size:15.0px;color:#ffffff;left:412.98px;letter-spacing:-0.309px;transform:scaleX(1.0073);-webkit-text-stroke:0.15px #fff;">90.56</span>
<span class="t" id="t23" style="top:300.00px;font-size:12.7px;color:#9aa0b4;left:495.60px;letter-spacing:-0.143px;transform:scaleX(1.0225);">Risk Index</span>
<span class="t" id="t24" style="top:317.01px;font-size:15.0px;color:#ffffff;left:506.63px;letter-spacing:-0.189px;transform:scaleX(1.0205);-webkit-text-stroke:0.15px #fff;">77.42</span>
<span class="t" id="t25" style="top:376.00px;font-size:12.7px;color:#9aa0b4;left:497.00px;letter-spacing:0.309px;transform:scaleX(1.0067);">Adaptability</span>
<span class="t" id="t26" style="top:394.01px;font-size:15.0px;color:#ffffff;left:523.00px;letter-spacing:-0.044px;transform:scaleX(1.0328);-webkit-text-stroke:0.15px #fff;">80</span>
<span class="t" id="t27" style="top:434.01px;font-size:12.7px;color:#9aa0b4;left:407.12px;letter-spacing:0.051px;transform:scaleX(1.0185);">Stability</span>
<span class="t" id="t28" style="top:452.01px;font-size:15.0px;color:#ffffff;left:421.83px;letter-spacing:-0.294px;transform:scaleX(1.0249);-webkit-text-stroke:0.15px #fff;">30</span>
<span class="t" id="t29" style="top:366.01px;font-size:12.7px;color:#9aa0b4;left:302.22px;letter-spacing:0.200px;transform:scaleX(1.0385);">Utilization</span>
<span class="t" id="t30" style="top:386.00px;font-size:12.7px;color:#9aa0b4;left:311.79px;letter-spacing:-0.136px;transform:scaleX(1.0113);">Of Funds</span>
<span class="t" id="t31" style="top:403.01px;font-size:15.0px;color:#ffffff;left:320.27px;letter-spacing:-0.450px;transform:scaleX(1.0208);-webkit-text-stroke:0.15px #fff;">56.6</span>
<span class="t" id="t32" style="top:290.01px;font-size:12.7px;color:#9aa0b4;left:322.00px;letter-spacing:-0.109px;transform:scaleX(1.0169);">Trading</span>
<span class="t" id="t33" style="top:310.00px;font-size:12.7px;color:#9aa0b4;left:322.00px;letter-spacing:0.202px;">Activity</span>
<span class="t" id="t34" style="top:327.01px;font-size:15.0px;color:#ffffff;left:328.01px;letter-spacing:-0.376px;transform:scaleX(1.0219);-webkit-text-stroke:0.15px #fff;">97.2</span>
<span class="t" id="t35" style="top:195.01px;font-size:14.5px;color:#ffffff;left:658.60px;letter-spacing:0.262px;transform:scaleX(1.0112);">Profit Ratio/Trading Times</span>
<span class="t" id="t36" style="top:225.01px;font-size:12.7px;color:#8e94a9;font-style:italic;right:544.50px;">2500%</span>
<span class="t" id="t37" style="top:259.01px;font-size:12.7px;color:#8e94a9;font-style:italic;right:544.50px;">2000%</span>
<span class="t" id="t38" style="top:293.01px;font-size:12.7px;color:#8e94a9;font-style:italic;right:544.50px;">1500%</span>
<span class="t" id="t39" style="top:326.01px;font-size:12.7px;color:#8e94a9;font-style:italic;right:544.50px;">1000%</span>
<span class="t" id="t40" style="top:360.00px;font-size:12.7px;color:#8e94a9;font-style:italic;right:544.50px;">500%</span>
<span class="t" id="t41" style="top:394.00px;font-size:12.7px;color:#8e94a9;font-style:italic;right:544.50px;">0%</span>
<span class="t" id="t42" style="top:428.00px;font-size:12.7px;color:#8e94a9;font-style:italic;right:544.50px;">-500%</span>
<span class="t" id="t43" style="top:442.00px;font-size:12.7px;color:#8e94a9;left:667.70px;width:100px;text-align:center;">0</span>
<span class="t" id="t44" style="top:442.00px;font-size:12.7px;color:#8e94a9;left:750.80px;width:100px;text-align:center;">1,000</span>
<span class="t" id="t45" style="top:442.00px;font-size:12.7px;color:#8e94a9;left:833.90px;width:100px;text-align:center;">2,000</span>
<span class="t" id="t46" style="top:442.00px;font-size:12.7px;color:#8e94a9;left:917.00px;width:100px;text-align:center;">3,000</span>
<span class="t" id="t47" style="top:442.00px;font-size:12.7px;color:#8e94a9;left:1000.10px;width:100px;text-align:center;">4,000</span>
<span class="t" id="t48" style="top:442.00px;font-size:12.7px;color:#8e94a9;left:1083.20px;width:100px;text-align:center;">5,000</span>
<span class="t" id="t49" style="top:442.00px;font-size:12.7px;color:#8e94a9;left:1166.30px;width:100px;text-align:center;">6,000</span>
<span class="t" id="t50" style="top:553.01px;font-size:23.6px;color:#ffffff;font-weight:700;left:264.10px;letter-spacing:-0.156px;transform:scaleX(1.0061);">Configuration Parameters</span>
<span class="t" id="t51" style="top:608.01px;font-size:15.2px;color:#01ca94;left:275.33px;letter-spacing:-0.450px;transform:scaleX(0.9054);/*tag*/">RSI</span>
<span class="t" id="t52" style="top:608.01px;font-size:15.2px;color:#01ca94;left:343.36px;letter-spacing:-0.450px;transform:scaleX(1.0073);/*tag*/">SMA</span>
<span class="t" id="t53" style="top:608.01px;font-size:15.2px;color:#01ca94;left:422.70px;letter-spacing:-0.264px;transform:scaleX(1.0181);/*tag*/">DCA Trading</span>
<span class="t" id="t54" style="top:608.01px;font-size:15.2px;color:#01ca94;left:553.31px;letter-spacing:-0.450px;transform:scaleX(1.0095);/*tag*/">Fixed Stop Loss</span>
<span class="t" id="t55" style="top:608.01px;font-size:15.2px;color:#01ca94;left:703.90px;letter-spacing:-0.291px;transform:scaleX(1.0048);/*tag*/">Fixed Take Profit</span>
<span class="t" id="t56" style="top:608.01px;font-size:15.2px;color:#01ca94;left:859.10px;letter-spacing:-0.349px;transform:scaleX(1.0138);/*tag*/">Range Trading</span>
<span class="t" id="t57" style="top:608.01px;font-size:15.2px;color:#01ca94;left:1002.70px;letter-spacing:-0.117px;transform:scaleX(1.0135);/*tag*/">High Win Rate</span>
<span class="t" id="t58" style="top:658.01px;font-size:15.2px;color:#01ca94;left:275.30px;letter-spacing:-0.079px;transform:scaleX(1.0120);/*tag*/">High-Frequency Trading</span>
<span class="t" id="t59" style="top:658.01px;font-size:15.2px;color:#01ca94;left:484.50px;letter-spacing:-0.256px;transform:scaleX(1.0131);/*tag*/">Leveraged Trading</span>
<span class="t" id="t60" style="top:658.01px;font-size:15.2px;color:#01ca94;left:654.10px;letter-spacing:-0.089px;transform:scaleX(1.0086);/*tag*/">Long Term Investments</span>
<span class="t" id="t61" style="top:658.01px;font-size:15.2px;color:#01ca94;left:857.90px;letter-spacing:-0.450px;/*tag*/">Low Risk</span>
<span class="t" id="t62" style="top:658.01px;font-size:15.2px;color:#01ca94;left:963.30px;letter-spacing:-0.294px;/*tag*/">Aggressive</span>
</body></html>
